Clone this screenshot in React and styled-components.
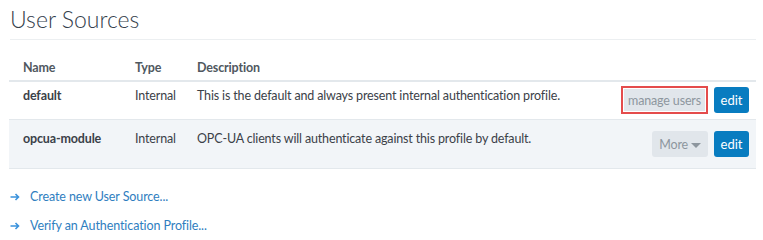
import styled, { createGlobalStyle } from "styled-components";

const GlobalStyle = createGlobalStyle`
  body {
    margin: 0;
    background: #ffffff;
    font-family: Lato, "Open Sans", sans-serif;
    color: #3b4148;
  }
`;

const Page = styled.div`
  padding: 6px 7px 0 9px;
  width: 747px;
`;

const Title = styled.h1`
  margin: 0 0 0 1px;
  padding-bottom: 7px;
  font-size: 23px;
  font-weight: 300;
  color: #34404c;
  border-bottom: 1px solid #eceff1;
  line-height: 26px;
`;

const Table = styled.table`
  width: 100%;
  margin-top: 16px;
  border-collapse: collapse;
  font-size: 12.5px;
  letter-spacing: -0.15px;
`;

const HeadCell = styled.th`
  text-align: left;
  font-weight: 700;
  color: #505860;
  padding: 4px 0 5px ${(p) => p.$pad || 0}px;
  height: 14px;
  background: #ffffff;
  border-bottom: 2px solid #e3e8ec;
`;

const Row = styled.tr`
  background: ${(p) => (p.$striped ? "#f2f5f8" : "#ffffff")};
  border-bottom: 1px solid #e3e8ec;
`;

const Cell = styled.td`
  padding: ${(p) => (p.$tall ? "11px" : "6px")} 0 0 ${(p) => p.$pad || 0}px;
  vertical-align: top;
  height: ${(p) => (p.$tall ? "37px" : "31px")};
  color: #3b4148;
  font-weight: ${(p) => (p.$bold ? 700 : 400)};
`;

const Actions = styled.td`
  padding: ${(p) => (p.$tall ? 11 : 4)}px 7px 0 0;
  vertical-align: top;
`;

const ActionGroup = styled.div`
  display: flex;
  justify-content: flex-end;
  align-items: center;
  gap: 6px;
`;

const Highlight = styled.div`
  border: 2px solid #e44c4c;
  padding: 1px;
  display: flex;
`;

const GreyButton = styled.button`
  font-family: inherit;
  font-size: 12.5px;
  letter-spacing: -0.15px;
  color: #8d969e;
  background: #e1e6eb;
  border: none;
  border-radius: ${(p) => (p.$square ? 0 : 3)}px;
  height: ${(p) => (p.$square ? 22 : 26)}px;
  padding: 0 ${(p) => (p.$square ? 4 : 7)}px;
  display: flex;
  align-items: center;
  gap: 3px;
`;

const Caret = styled.span`
  width: 0;
  height: 0;
  border-left: 5px solid transparent;
  border-right: 5px solid transparent;
  border-top: 5px solid #8d969e;
  margin-top: 2px;
`;

const EditButton = styled.button`
  font-family: inherit;
  font-size: 13px;
  color: #ffffff;
  background: #087cc0;
  border: none;
  border-radius: 3px;
  height: 26px;
  width: 35px;
  padding: 0;
`;

const Links = styled.div`
  margin-top: 19px;
  display: flex;
  flex-direction: column;
  gap: 12px;
  padding-left: 1px;
`;

const LinkRow = styled.a`
  display: flex;
  align-items: center;
  gap: 10px;
  font-size: 12.5px;
  letter-spacing: -0.1px;
  color: #2f7ec0;
  text-decoration: none;
  height: 17px;
`;

const Arrow = () => (
  <svg width="10" height="10" viewBox="0 0 10 10">
    <path d="M0.5 5H8.5M5.5 2L8.5 5L5.5 8" stroke="#3b92dc" strokeWidth="1.6" fill="none" />
  </svg>
);

const sources = [
  {
    name: "default",
    type: "Internal",
    description: "This is the default and always present internal authentication profile.",
    manage: true,
  },
  {
    name: "opcua-module",
    type: "Internal",
    description: "OPC-UA clients will authenticate against this profile by default.",
    manage: false,
  },
];

export default function App() {
  return (
    <Page>
      <GlobalStyle />
      <Title>User Sources</Title>
      <Table>
        <thead>
          <tr>
            <HeadCell $pad={14} style={{ width: 112 }}>Name</HeadCell>
            <HeadCell style={{ width: 62 }}>Type</HeadCell>
            <HeadCell>Description</HeadCell>
            <HeadCell />
          </tr>
        </thead>
        <tbody>
          {sources.map((s, i) => (
            <Row key={s.name} $striped={i % 2 === 1}>
              <Cell $pad={14} $bold $tall={i === 1}>{s.name}</Cell>
              <Cell $tall={i === 1}>{s.type}</Cell>
              <Cell $tall={i === 1}>{s.description}</Cell>
              <Actions $tall={i === 1}>
                <ActionGroup>
                  {s.manage ? (
                    <Highlight>
                      <GreyButton $square>manage users</GreyButton>
                    </Highlight>
                  ) : (
                    <GreyButton>
                      More <Caret />
                    </GreyButton>
                  )}
                  <EditButton>edit</EditButton>
                </ActionGroup>
              </Actions>
            </Row>
          ))}
        </tbody>
      </Table>
      <Links>
        <LinkRow href="#">
          <Arrow />
          Create new User Source...
        </LinkRow>
        <LinkRow href="#">
          <Arrow />
          Verify an Authentication Profile...
        </LinkRow>
      </Links>
    </Page>
  );
}
